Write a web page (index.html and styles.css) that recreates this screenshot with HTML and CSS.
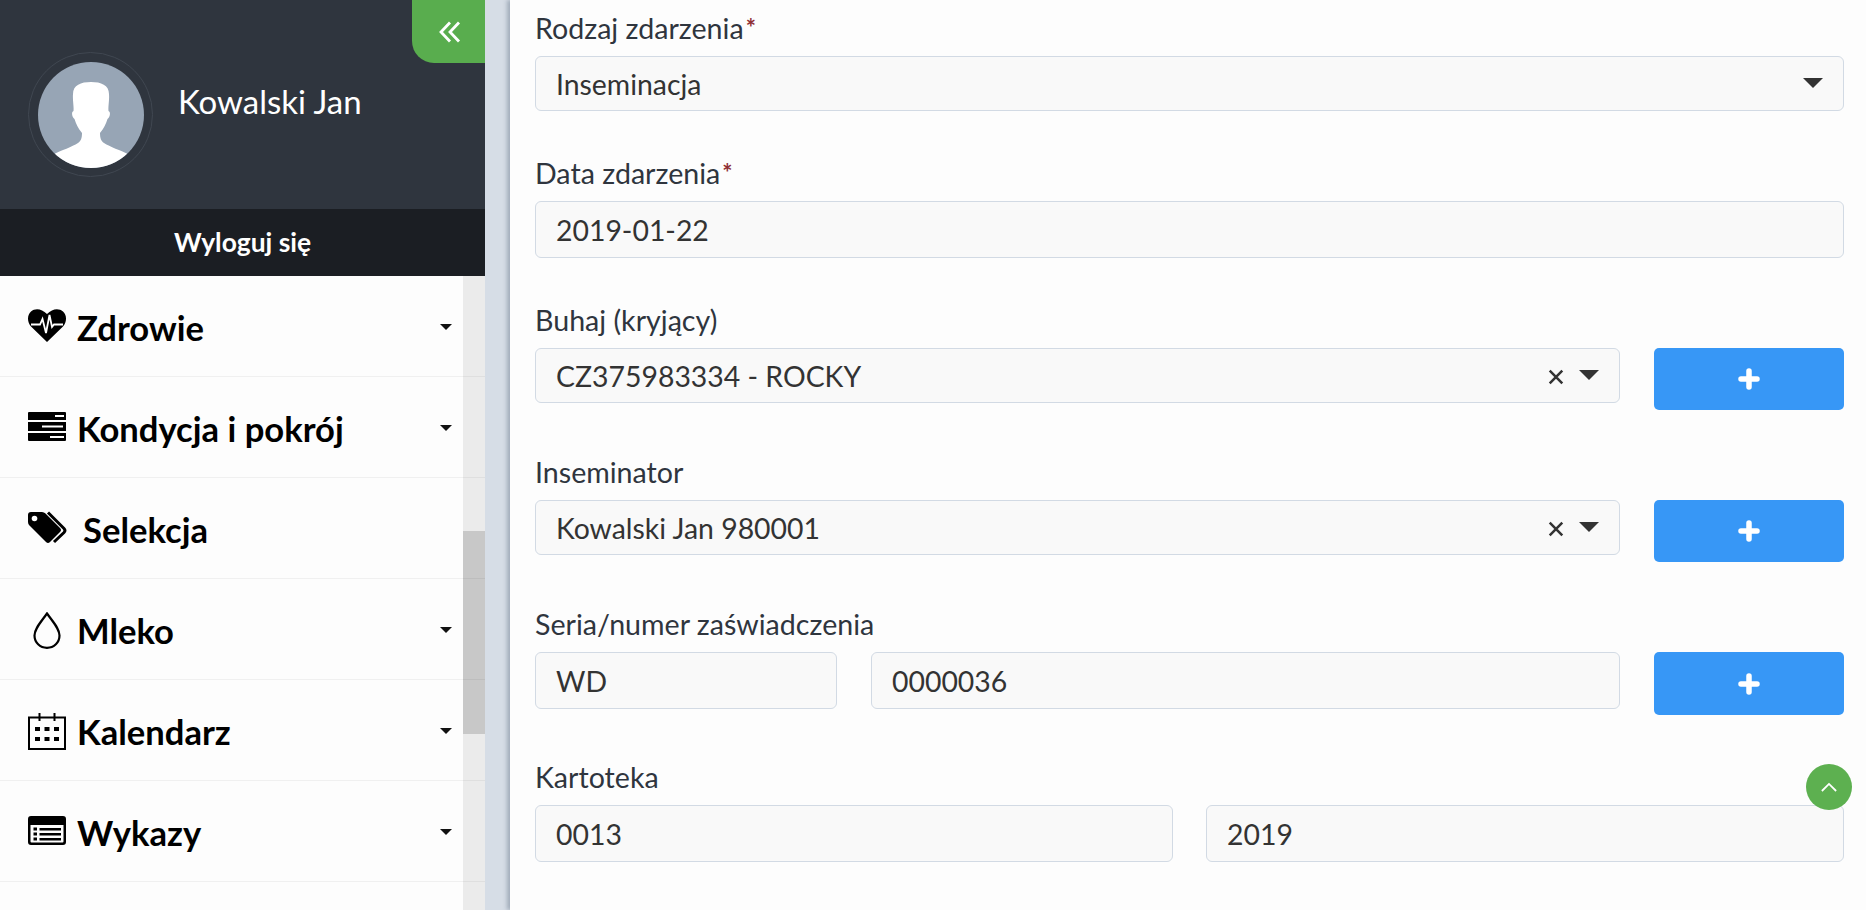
FILE: index.html
```html
<!DOCTYPE html>
<html lang="pl">
<head>
<meta charset="utf-8">
<title>Zdarzenie</title>
<link rel="stylesheet" href="styles.css">
</head>
<body>
<div class="app">
  <aside class="sidebar">
    <header class="profile">
      <div class="avatar-ring">
        <svg class="avatar" viewBox="0 0 106 106">
          <defs><clipPath id="av"><circle cx="53" cy="53" r="53"/></clipPath></defs>
          <circle cx="53" cy="53" r="53" fill="#97a5b5"/>
          <path clip-path="url(#av)" fill="#fff" d="M35 32C35 23 43 20 53 20C63 20 71 23 71 32C71.500 39 70 44 70.500 49C73 50 72 55 69.500 57C68 62 66 66 62 71C62 76 63 79 66 81C72 85 82 88 92 93L92 110L14 110L14 93C24 88 34 85 40 81C43 79 44 76 44 71C40 66 38 62 36.500 57C34 55 33 50 35.500 49C36 44 34.500 39 35 32Z"/>
        </svg>
      </div>
      <span class="name">Kowalski Jan</span>
      <button class="collapse" type="button" aria-label="Zwiń">
        <svg viewBox="0 0 22 22" width="22" height="22" fill="none" stroke="#fff" stroke-width="2.800"><path d="M11 1.500 2 11l9 9.500M20 1.500 11 11l9 9.500"/></svg>
      </button>
    </header>
    <a class="logout">Wyloguj się</a>
    <nav class="menu">
      <a class="item">
        <svg class="ico" viewBox="0 0 38 33"><path d="M19 33 3 17.500C-1 13-1 6 3 2.600 7-1 13.500-.6 19 5 24.500-.6 31-1 35 2.600 39 6 39 13 35 17.500Z"/><path fill="none" stroke="#fff" stroke-width="1.800" d="M3 15.500H12L14.500 10 18 24 21.500 6 24 18 26 15.500H35"/></svg>
        <span class="label">Zdrowie</span><i class="caret"></i>
      </a>
      <a class="item">
        <svg class="ico" viewBox="0 0 38 29"><path d="M1 0H37A1 1 0 0 1 38 1V8H0V1A1 1 0 0 1 1 0ZM0 10H38V19H0ZM0 21H38V28A1 1 0 0 1 37 29H1A1 1 0 0 1 0 28Z"/><path fill="#fff" d="M27 3H36V5H27ZM14 13.500H35V15.500H14ZM22 24H36V26H22Z"/></svg>
        <span class="label">Kondycja i pokrój</span><i class="caret"></i>
      </a>
      <a class="item">
        <svg class="ico ico-tag" viewBox="0 0 40 31"><path d="M0 3Q0 0 3 0H14Q16 0 17.500 1.500L32 16Q34 18 32 20L22 30Q20 32 18 30L1.500 13.500Q0 12 0 10Z"/><circle cx="6.500" cy="6.500" r="2.800" fill="#fff"/><path fill="none" stroke="#000" stroke-width="3" d="M20 .500 36 16.500Q38 18.500 36 20.500L26 30"/></svg>
        <span class="label label-wide">Selekcja</span>
      </a>
      <a class="item">
        <svg class="ico ico-low" viewBox="0 0 38 37"><path fill="none" stroke="#000" stroke-width="2.200" d="M19 1.500C25 10 31.500 16.500 31.500 23.500C31.500 30.500 26 35.800 19 35.800C12 35.800 6.500 30.500 6.500 23.500C6.500 16.500 13 10 19 1.500Z"/></svg>
        <span class="label">Mleko</span><i class="caret"></i>
      </a>
      <a class="item">
        <svg class="ico ico-low" viewBox="0 0 38 37"><path fill="none" stroke="#000" stroke-width="2" d="M1 4.500H37V36H1ZM11.500 0V8M26.500 0V8"/><path d="M7 14H12V18H7ZM16.500 14H21.500V18H16.500ZM26 14H31V18H26ZM7 24H12V28H7ZM16.500 24H21.500V28H16.500ZM26 24H31V28H26Z"/></svg>
        <span class="label">Kalendarz</span><i class="caret"></i>
      </a>
      <a class="item">
        <svg class="ico" viewBox="0 0 38 29"><path fill-rule="evenodd" d="M3 0H35Q38 0 38 3V26Q38 29 35 29H3Q0 29 0 26V3Q0 0 3 0ZM2.500 9V25.500Q2.500 26.500 3.500 26.500H34.500Q35.500 26.500 35.500 25.500V9Z"/><path d="M5.500 11.500H9V14.500H5.500ZM5.500 16.500H9V19.500H5.500ZM5.500 21.500H9V24.500H5.500ZM11.500 12H33V14.500H11.500ZM11.500 17H33V19.500H11.500ZM11.500 22H33V24.500H11.500Z"/></svg>
        <span class="label">Wykazy</span><i class="caret"></i>
      </a>
    </nav>
    <div class="scrollbar"><div class="thumb"></div></div>
  </aside>
  <main class="content">
    <section class="group">
      <div class="lab">Rodzaj zdarzenia<b class="req">*</b></div>
      <div class="field sel"><span class="val">Inseminacja</span><i class="tri"></i></div>
    </section>
    <section class="group">
      <div class="lab">Data zdarzenia<b class="req">*</b></div>
      <div class="field inp"><span class="val">2019-01-22</span></div>
    </section>
    <section class="group">
      <div class="lab">Buhaj (kryjący)</div>
      <div class="row two">
        <div class="field sel"><span class="val">CZ375983334 - ROCKY</span><svg class="clear" viewBox="0 0 14 14"><path d="M1.500 1.500 12.500 12.500M12.500 1.500 1.500 12.500"/></svg><i class="tri"></i></div>
        <button class="add" type="button" aria-label="Dodaj"><svg class="plus" viewBox="0 0 22 22"><path d="M11 3V19M3 11H19"/></svg></button>
      </div>
    </section>
    <section class="group">
      <div class="lab">Inseminator</div>
      <div class="row two">
        <div class="field sel"><span class="val">Kowalski Jan 980001</span><svg class="clear" viewBox="0 0 14 14"><path d="M1.500 1.500 12.500 12.500M12.500 1.500 1.500 12.500"/></svg><i class="tri"></i></div>
        <button class="add" type="button" aria-label="Dodaj"><svg class="plus" viewBox="0 0 22 22"><path d="M11 3V19M3 11H19"/></svg></button>
      </div>
    </section>
    <section class="group">
      <div class="lab">Seria/numer zaświadczenia</div>
      <div class="row three">
        <div class="field inp"><span class="val">WD</span></div>
        <div class="field inp"><span class="val">0000036</span></div>
        <button class="add add-tall" type="button" aria-label="Dodaj"><svg class="plus" viewBox="0 0 22 22"><path d="M11 3V19M3 11H19"/></svg></button>
      </div>
    </section>
    <section class="group">
      <div class="lab">Kartoteka</div>
      <div class="row half">
        <div class="field inp"><span class="val">0013</span></div>
        <div class="field inp"><span class="val">2019</span></div>
      </div>
    </section>
    <button class="top" type="button" aria-label="Do góry">
      <svg viewBox="0 0 18 11" width="16" height="10" fill="none" stroke="#fff" stroke-width="2"><path d="M1 10 9 2l8 8"/></svg>
    </button>
  </main>
</div>
</body>
</html>
```
FILE: styles.css
```css
* { box-sizing: border-box; }
html, body { margin: 0; height: 100%; overflow: hidden; }
body { font-family: Lato, "Liberation Sans", sans-serif; background: #d6dde6; }
.app { display: flex; height: 910px; }

.sidebar { position: relative; width: 485px; flex: none; background: #fdfdfd; overflow: hidden; }
.profile { position: relative; height: 209px; background: #2f353e; display: flex; align-items: flex-start; padding: 52px 0 0 28px; }
.avatar-ring { width: 125px; height: 125px; border: 1px solid #404751; border-radius: 50%; display: flex; align-items: center; justify-content: center; flex: none; }
.avatar { width: 106px; height: 106px; display: block; }
.name { color: #fff; font-size: 33px; line-height: 40px; margin: 29px 0 0 25px; }
.collapse { position: absolute; top: 0; right: 0; width: 73px; height: 63px; background: #59ad4e; border: 0; border-bottom-left-radius: 22px; padding: 0 0 0 3px; display: flex; align-items: center; justify-content: center; }
.logout { display: block; height: 67px; background: #1b1e23; color: #fff; font-weight: 700; font-size: 26.400px; line-height: 66px; text-align: center; }

.item { display: flex; align-items: center; height: 101px; padding: 0 33px 0 28px; border-bottom: 1px solid #f0f0f0; color: #000; }
.ico { width: 38px; height: 37px; flex: none; margin-top: -2px; }
.ico-tag { width: 40px; }
.ico-low { margin-top: 2px; }
.label { font-size: 34.600px; font-weight: 700; margin: 3px 0 0 11px; flex: 1; line-height: 40px; }
.label-wide { margin-left: 15px; }
.caret { width: 0; height: 0; border-left: 6px solid transparent; border-right: 6px solid transparent; border-top: 6px solid #111; margin-top: 1px; }

.scrollbar { position: absolute; top: 276px; right: 0; bottom: 0; width: 22px; background: rgba(0,0,0,.07); }
.thumb { margin-top: 255px; height: 203px; background: rgba(0,0,0,.15); }

.content { position: relative; flex: none; width: 1356px; margin-left: 25px; background: #fdfdfd; padding: 11px 22px 0 25px; box-shadow: -3px 0 4px rgba(100,115,135,.45); }
.group { margin-bottom: 45px; }
.lab { height: 45px; line-height: 34px; font-size: 28.600px; color: #2f353e; }
.req { color: #8f2f35; font-size: 24px; font-weight: 700; margin-left: 2px; vertical-align: 2px; line-height: 0; }

.field { display: flex; align-items: center; background: #f9f9f9; border: 1.500px solid #d2dae4; border-radius: 6px; padding: 0 20.500px 0 20px; font-size: 28.400px; color: #333; }
.val { flex: 1; white-space: nowrap; }
.sel { height: 55px; }
.inp { height: 57px; }
.tri { width: 0; height: 0; border-left: 10px solid transparent; border-right: 10px solid transparent; border-top: 10px solid #333; margin-top: -1px; }
.clear { width: 16px; height: 16px; margin: 3px 15px 0 0; stroke: #333; stroke-width: 2.200; fill: none; flex: none; }

.row { display: grid; align-items: start; }
.two { grid-template-columns: 1fr 190px; column-gap: 34px; }
.three { grid-template-columns: 302px 1fr 190px; column-gap: 34px; }
.half { grid-template-columns: 638px 1fr; column-gap: 33px; }
.add { height: 62px; background: #3797f6; border: 0; border-radius: 5px; padding: 0; display: flex; align-items: center; justify-content: center; }
.add-tall { height: 63px; }
.plus { width: 22px; height: 22px; stroke: #fff; stroke-width: 5.500; stroke-linecap: round; fill: none; }

.top { position: absolute; left: 1296px; top: 764px; width: 46px; height: 46px; border: 0; border-radius: 50%; background: #5db050; padding: 0; display: flex; align-items: center; justify-content: center; }
```
